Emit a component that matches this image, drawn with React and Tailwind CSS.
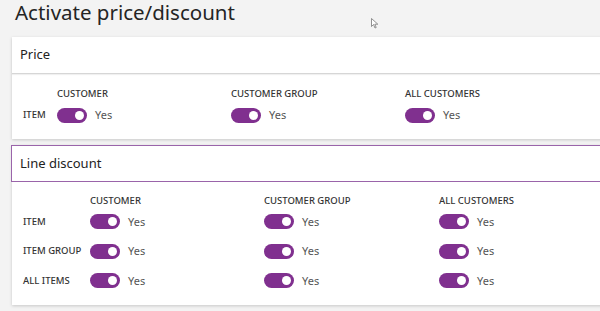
import React from "react";

const font = { fontFamily: '"Noto Sans", "Open Sans", sans-serif' };

function Toggle() {
  return (
    <div className="flex items-center gap-[8px]">
      <div className="w-[30px] h-[15px] rounded-full bg-[#80308f] flex items-center justify-end pr-[3px]">
        <div className="w-[9px] h-[9px] rounded-full bg-white" />
      </div>
      <span className="text-[11px] text-[#555]">Yes</span>
    </div>
  );
}

function ColLabel({ children, h }) {
  return (
    <div className={`${h} text-[9.5px] leading-[12px] font-medium text-[#333] uppercase`}>{children}</div>
  );
}

function RowLabel({ children }) {
  return (
    <div className="text-[9.5px] font-medium text-[#333] flex items-center">{children}</div>
  );
}

export default function App() {
  const cols = ["CUSTOMER", "CUSTOMER GROUP", "ALL CUSTOMERS"];
  const rows = ["ITEM", "ITEM GROUP", "ALL ITEMS"];
  return (
    <div className="w-[600px] h-[311px] bg-[#f3f3f3] overflow-hidden relative" style={font}>
      <div className="pl-[15px] h-[37px] text-[20.5px] leading-[24px] text-[#252525]">
        Activate price/discount
      </div>
      <svg className="absolute left-[371px] top-[18px]" width="8" height="11" viewBox="0 0 8 11">
        <path d="M0.5 0.5 L0.5 8.5 L2.5 6.5 L4 10 L5.2 9.5 L3.8 6.2 L6.8 6.2 Z" fill="#fff" stroke="#777" strokeWidth="0.8" />
      </svg>

      <div className="ml-[12px] w-[600px] bg-white shadow-[0_1px_3px_rgba(0,0,0,0.18)]">
        <div className="h-[37px] flex items-center pl-[8px] text-[13px] text-[#222] border-b border-[#d6d6d6] shadow-[0_1px_1px_rgba(0,0,0,0.06)]">
          Price
        </div>
        <div className="pl-[11px] pt-[14px] pb-[9px] grid grid-cols-[34px_174px_174px_174px]">
          <div />
          {cols.map((c) => (
            <ColLabel key={c} h="h-[13px]">{c}</ColLabel>
          ))}
          <div className="h-[29px] flex items-center">
            <RowLabel>ITEM</RowLabel>
          </div>
          {cols.map((c) => (
            <div key={c} className="h-[29px] flex items-center">
              <Toggle />
            </div>
          ))}
        </div>
      </div>

      <div className="ml-[12px] mt-[6px] w-[600px] bg-white shadow-[0_1px_3px_rgba(0,0,0,0.18)]">
        <div className="h-[37px] flex items-center pl-[8px] text-[13px] text-[#222] border border-[#9a64aa] -ml-[1px]">
          Line discount
        </div>
        <div className="pl-[11px] pt-[13px] pb-[9px] grid grid-cols-[67px_174px_175px_174px]">
          <div />
          {cols.map((c) => (
            <ColLabel key={c} h="h-[12px]">{c}</ColLabel>
          ))}
          {rows.map((r) => (
            <React.Fragment key={r}>
              <div className="h-[29.5px] flex items-center">
                <RowLabel>{r}</RowLabel>
              </div>
              {cols.map((c) => (
                <div key={c} className="h-[29.5px] flex items-center">
                  <Toggle />
                </div>
              ))}
            </React.Fragment>
          ))}
        </div>
      </div>
    </div>
  );
}
